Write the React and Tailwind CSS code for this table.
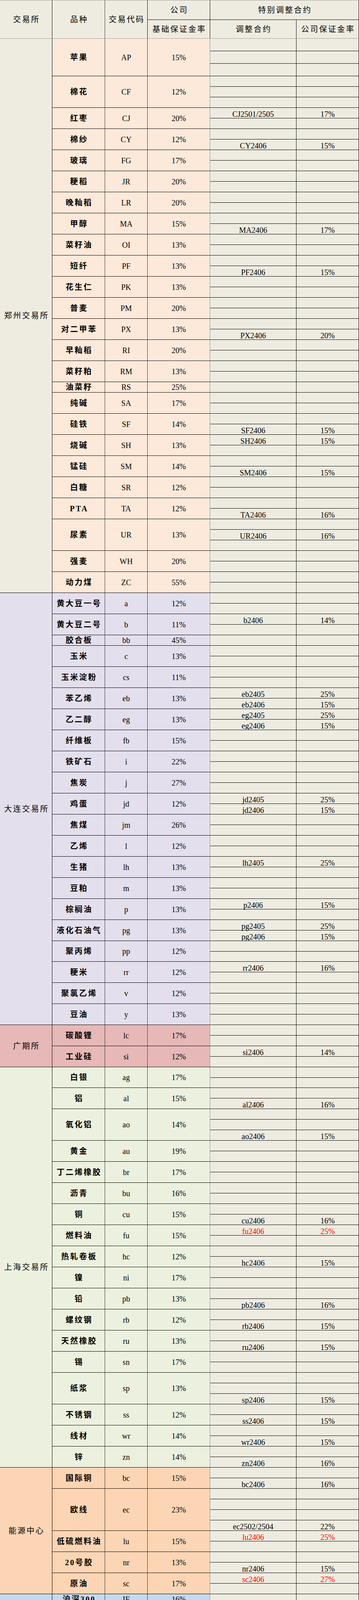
import React from "react";

const R = "red";

// each item: [name, code, base rate, sub rows, row size]
// sub row: 0 = empty, [contract, rate, color?]
const groups = [
  {
    name: "郑州交易所",
    exBg: "bg-[#eeece1]",
    bg: "bg-[#fde9d9]",
    items: [
      ["苹果", "AP", "15%", [0, 0, 0], "tall"],
      ["棉花", "CF", "12%", [0, 0, 0]],
      ["红枣", "CJ", "20%", [["CJ2501/2505", "17%"], 0]],
      ["棉纱", "CY", "12%", [0, ["CY2406", "15%"]]],
      ["玻璃", "FG", "17%", [0, 0]],
      ["粳稻", "JR", "20%", [0, 0]],
      ["晚籼稻", "LR", "20%", [0, 0]],
      ["甲醇", "MA", "15%", [0, ["MA2406", "17%"]]],
      ["菜籽油", "OI", "13%", [0, 0]],
      ["短纤", "PF", "13%", [0, ["PF2406", "15%"]]],
      ["花生仁", "PK", "13%", [0, 0]],
      ["普麦", "PM", "20%", [0, 0]],
      ["对二甲苯", "PX", "13%", [0, ["PX2406", "20%"]]],
      ["早籼稻", "RI", "20%", [0, 0]],
      ["菜籽粕", "RM", "13%", [0, 0]],
      ["油菜籽", "RS", "25%", [0]],
      ["纯碱", "SA", "17%", [0, 0]],
      ["硅铁", "SF", "14%", [0, ["SF2406", "15%"]]],
      ["烧碱", "SH", "13%", [["SH2406", "15%"], 0]],
      ["锰硅", "SM", "14%", [0, ["SM2406", "15%"]]],
      ["白糖", "SR", "12%", [0, 0]],
      ["PTA", "TA", "12%", [0, ["TA2406", "16%"]]],
      ["尿素", "UR", "13%", [0, ["UR2406", "16%"], 0]],
      ["强麦", "WH", "20%", [0, 0]],
      ["动力煤", "ZC", "55%", [0, 0]],
    ],
  },
  {
    name: "大连交易所",
    exBg: "bg-[#e4dfec]",
    bg: "bg-[#e4dfec]",
    items: [
      ["黄大豆一号", "a", "12%", [0, 0]],
      ["黄大豆二号", "b", "11%", [["b2406", "14%"], 0]],
      ["胶合板", "bb", "45%", [0]],
      ["玉米", "c", "13%", [0, 0]],
      ["玉米淀粉", "cs", "11%", [0, 0]],
      ["苯乙烯", "eb", "13%", [["eb2405", "25%"], ["eb2406", "15%"]]],
      ["乙二醇", "eg", "13%", [["eg2405", "25%"], ["eg2406", "15%"]]],
      ["纤维板", "fb", "15%", [0, 0]],
      ["铁矿石", "i", "22%", [0, 0]],
      ["焦炭", "j", "27%", [0, 0]],
      ["鸡蛋", "jd", "12%", [["jd2405", "25%"], ["jd2406", "15%"]]],
      ["焦煤", "jm", "26%", [0, 0]],
      ["乙烯", "l", "12%", [0, 0]],
      ["生猪", "lh", "13%", [["lh2405", "25%"], 0]],
      ["豆粕", "m", "13%", [0, 0]],
      ["棕榈油", "p", "13%", [["p2406", "15%"], 0]],
      ["液化石油气", "pg", "13%", [["pg2405", "25%"], ["pg2406", "15%"]]],
      ["聚丙烯", "pp", "12%", [0, 0], "short"],
      ["粳米", "rr", "12%", [["rr2406", "16%"], 0]],
      ["聚氯乙烯", "v", "12%", [0, 0]],
      ["豆油", "y", "13%", [0, 0]],
    ],
  },
  {
    name: "广期所",
    exBg: "bg-[#e6b8b7]",
    bg: "bg-[#e6b8b7]",
    items: [
      ["碳酸锂", "lc", "17%", [0, 0]],
      ["工业硅", "si", "12%", [["si2406", "14%"], 0]],
    ],
  },
  {
    name: "上海交易所",
    exBg: "bg-[#ebf1de]",
    bg: "bg-[#ebf1de]",
    items: [
      ["白银", "ag", "17%", [0, 0], "short"],
      ["铝", "al", "15%", [0, ["al2406", "16%"]]],
      ["氧化铝", "ao", "14%", [0, 0, ["ao2406", "15%"]]],
      ["黄金", "au", "19%", [0, 0]],
      ["丁二烯橡胶", "br", "17%", [0, 0]],
      ["沥青", "bu", "16%", [0, 0]],
      ["铜", "cu", "15%", [0, ["cu2406", "16%"]]],
      ["燃料油", "fu", "15%", [["fu2406", "25%", R], 0]],
      ["热轧卷板", "hc", "12%", [0, ["hc2406", "15%"]]],
      ["镍", "ni", "17%", [0, 0]],
      ["铅", "pb", "13%", [0, ["pb2406", "16%"]]],
      ["螺纹钢", "rb", "12%", [0, ["rb2406", "15%"]]],
      ["天然橡胶", "ru", "13%", [0, ["ru2406", "15%"]]],
      ["锡", "sn", "17%", [0, 0]],
      ["纸浆", "sp", "13%", [0, 0, ["sp2406", "15%"]]],
      ["不锈钢", "ss", "12%", [0, ["ss2406", "15%"]]],
      ["线材", "wr", "14%", [0, ["wr2406", "15%"]]],
      ["锌", "zn", "14%", [0, ["zn2406", "16%"]]],
    ],
  },
  {
    name: "能源中心",
    exBg: "bg-[#fcd5b4]",
    bg: "bg-[#fcd5b4]",
    items: [
      ["国际铜", "bc", "15%", [0, ["bc2406", "16%"]]],
      ["欧线", "ec", "23%", [0, 0, 0, ["ec2502/2504", "22%"]]],
      ["低硫燃料油", "lu", "15%", [["lu2406", "25%", R], 0]],
      ["20号胶", "nr", "13%", [0, ["nr2406", "15%"]]],
      ["原油", "sc", "17%", [["sc2406", "27%", R], 0]],
    ],
  },
  {
    name: "中金所",
    exBg: "bg-[#c5d9f1]",
    bg: "bg-[#c5d9f1]",
    items: [
      ["沪深300", "IF", "16%", [0]],
      ["中证1000", "IM", "16%", [0]],
      ["中证500", "IC", "16%", [0]],
      ["上证50", "IH", "16%", [0]],
      ["2年期国债", "TS", "1%", [["TS2403", "1.5%"]]],
      ["5年期国债", "TF", "3.2%", [["TF2403", "4%"]]],
      ["10年期国债", "T", "4%", [["T2403", "5%"]]],
      ["30年期国债", "TL", "5%", [["TL2403", "6.5%"]]],
    ],
  },
];

function SubRow({ row, h }) {
  const color = row && row[2] === R ? "text-[#ff0000]" : "text-black";
  return (
    <div className={`flex border-b border-black ${h}`}>
      <div className={`w-[221px] flex items-end justify-center border-r border-black leading-[20px] ${color}`}>
        {row ? row[0] : ""}
      </div>
      <div className={`w-[160px] flex items-end justify-center border-r border-black leading-[20px] ${color}`}>
        {row ? row[1] : ""}
      </div>
    </div>
  );
}

function Product({ item, bg }) {
  const [name, code, rate, rows, size] = item;
  const heightOf = (i) => {
    if (size === "tall") return "h-[32px]";
    if (size === "short" && i === rows.length - 1) return "h-[26px]";
    return "h-[27px]";
  };
  return (
    <div className="flex leading-[20px]">
      <div className={`w-[135px] flex items-center justify-center border-b border-r border-b-black border-r-[#333] font-bold tracking-[3px] pl-[3px] ${bg}`}>
        {name}
      </div>
      <div className={`w-[109px] flex items-center justify-center border-b border-r border-b-black border-r-[#333] ${bg}`}>
        {code}
      </div>
      <div className={`w-[160px] flex items-center justify-center border-b border-r border-b-black border-r-[#8c8c8c] ${bg}`}>
        {rate}
      </div>
      <div className="w-[381px] flex flex-col bg-[#eeece1]">
        {rows.map((r, i) => (
          <SubRow key={i} row={r} h={heightOf(i)} />
        ))}
      </div>
    </div>
  );
}

function Group({ group }) {
  return (
    <div className="flex">
      <div className={`w-[134px] flex items-center justify-center border-r border-b border-black tracking-[3px] pl-[3px] ${group.exBg}`}>
        {group.name}
      </div>
      <div className="flex flex-col">
        {group.items.map((it) => (
          <Product key={it[0]} item={it} bg={group.bg} />
        ))}
      </div>
    </div>
  );
}

function Header() {
  return (
    <div className="flex h-[99px] border-y border-[#9a9a9a] bg-[#eeece1] tracking-[3px]">
      <div className="w-[134px] flex items-center justify-center border-r border-black pl-[3px]">交易所</div>
      <div className="w-[135px] flex items-center justify-center border-r border-[#333] pl-[3px]">品种</div>
      <div className="w-[109px] flex items-center justify-center border-r border-black pl-[3px]">交易代码</div>
      <div className="w-[160px] flex flex-col border-r border-black">
        <div className="h-[50px] flex items-center justify-center border-b border-black pl-[3px]">公司</div>
        <div className="flex-1 flex items-center justify-center pl-[3px]">基础保证金率</div>
      </div>
      <div className="w-[381px] flex flex-col">
        <div className="h-[50px] flex items-center justify-center border-b border-r border-black pl-[3px]">特别调整合约</div>
        <div className="flex-1 flex">
          <div className="w-[221px] flex items-center justify-center border-r border-black pl-[3px]">调整合约</div>
          <div className="w-[160px] flex items-center justify-center border-r border-black pl-[3px]">公司保证金率</div>
        </div>
      </div>
    </div>
  );
}

function EmptyRow() {
  return (
    <div className="flex h-[27px] shrink-0 border-b border-[#d9d9d9]">
      <div className="w-[134px] border-r border-[#d9d9d9]" />
      <div className="w-[135px] border-r border-[#d9d9d9]" />
      <div className="w-[109px] border-r border-[#d9d9d9]" />
      <div className="w-[160px] border-r border-[#9a9a9a]" />
      <div className="w-[221px] border-r border-[#d9d9d9]" />
      <div className="w-[160px] border-r border-[#d9d9d9]" />
    </div>
  );
}

export default function App() {
  return (
    <div className="w-[919px] h-[4459px] overflow-hidden bg-white text-black text-[20px] leading-[20px] font-['Liberation_Serif','Noto_Sans_CJK_SC',serif]">
      <Header />
      {groups.map((g) => (
        <Group key={g.name} group={g} />
      ))}
      {[0, 1, 2, 3, 4, 5].map((i) => (
        <EmptyRow key={i} />
      ))}
    </div>
  );
}
